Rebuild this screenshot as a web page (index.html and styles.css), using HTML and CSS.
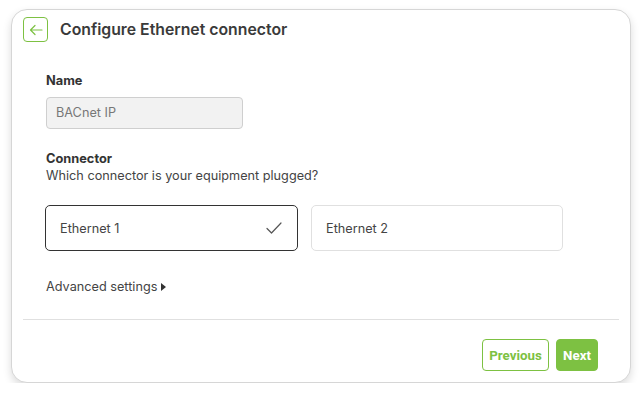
FILE: index.html
```html
<!DOCTYPE html>
<html lang="en">
<head>
<meta charset="utf-8">
<title>Configure Ethernet connector</title>
<link rel="stylesheet" href="styles.css">
</head>
<body>
<div class="card">
  <header class="head">
    <button class="back" aria-label="Back">
      <svg width="14" height="12" viewBox="0 0 14 12" fill="none" stroke="#7dc142" stroke-width="1.2" stroke-linecap="round" stroke-linejoin="round"><path d="M13 6H1.5M6 1.5L1.5 6L6 10.5"/></svg>
    </button>
    <h1 class="title">Configure Ethernet connector</h1>
  </header>
  <div class="body">
    <div class="label label-name">Name</div>
    <div class="input">BACnet IP</div>
    <div class="label label-conn">Connector</div>
    <div class="desc">Which connector is your equipment plugged?</div>
    <div class="options">
      <div class="opt opt-sel">
        <span>Ethernet 1</span>
        <svg width="16" height="12" viewBox="0 0 16 12" fill="none" stroke="#555" stroke-width="1.2" stroke-linecap="round" stroke-linejoin="round"><path d="M1 6.5L5.5 11L15 1"/></svg>
      </div>
      <div class="opt"><span>Ethernet 2</span></div>
    </div>
    <div class="adv">Advanced settings <span class="tri"></span></div>
  </div>
  <div class="divider"></div>
  <footer class="foot">
    <button class="btn btn-outline">Previous</button>
    <button class="btn btn-primary">Next</button>
  </footer>
</div>
</body>
</html>
```
FILE: styles.css
```css
* { box-sizing: border-box; }
html, body { margin: 0; padding: 0; background: #fff; }
body { font-family: Inter, "Noto Sans", sans-serif; color: #333; }

.card {
  margin: 9px 0 0 11px;
  width: 620px;
  height: 374px;
  border: 1px solid #d6d6d6;
  border-radius: 16px;
  background: #fff;
  box-shadow: 0 4px 8px rgba(0,0,0,0.14);
  padding: 0 11px;
  display: flex;
  flex-direction: column;
}

.head {
  display: flex;
  align-items: center;
  gap: 12px;
  padding-top: 7px;
  height: 32px;
}
.back {
  width: 25px;
  height: 25px;
  border: 1px solid #7dc142;
  border-radius: 4px;
  background: #fff;
  padding: 0;
  display: flex;
  align-items: center;
  justify-content: center;
}
.title {
  margin: 0;
  font-size: 15.8px;
  font-weight: 600;
  color: #3a3a3a;
  line-height: 20px;
}

.body {
  padding-left: 23px;
  display: flex;
  flex-direction: column;
  align-items: flex-start;
}
.label {
  font-size: 12.8px;
  font-weight: 700;
  line-height: 16px;
  color: #333;
}
.label-name { margin-top: 31px; }
.input {
  margin-top: 8px;
  width: 197px;
  height: 32px;
  border: 1px solid #cfcfcf;
  border-radius: 4px;
  background: #f2f2f2;
  color: #777;
  font-size: 12.7px;
  line-height: 30px;
  padding-left: 9px;
}
.label-conn { margin-top: 22px; }
.desc {
  margin-top: 1px;
  font-size: 12.7px;
  line-height: 16px;
  color: #444;
}
.options {
  margin-top: 21px;
  margin-left: -1px;
  display: flex;
  gap: 13px;
}
.opt {
  width: 253px;
  height: 46px;
  border: 1px solid #e0e0e0;
  border-radius: 5px;
  display: flex;
  align-items: center;
  justify-content: space-between;
  padding: 0 15px 0 14px;
  font-size: 12.7px;
  color: #444;
}
.opt + .opt { width: 252px; }
.opt-sel { border-color: #333; }
.adv {
  margin-top: 28px;
  font-size: 12.7px;
  line-height: 16px;
  color: #444;
  display: flex;
  align-items: center;
  gap: 4px;
}
.tri {
  width: 0;
  height: 0;
  border-top: 4px solid transparent;
  border-bottom: 4px solid transparent;
  border-left: 5px solid #333;
}

.divider {
  margin-top: 24px;
  height: 1px;
  background: #e0e0e0;
}

.foot {
  display: flex;
  justify-content: flex-end;
  gap: 7px;
  padding: 19px 21px 0 0;
}
.btn {
  height: 32px;
  border-radius: 4px;
  font-family: Roboto, "Liberation Sans", sans-serif;
  font-weight: 700;
  font-size: 13.3px;
  padding: 0;
  cursor: pointer;
}
.btn-outline {
  border: 1px solid #7dc142;
  background: #fff;
  color: #7dc142;
  width: 67px;
}
.btn-primary {
  border: 1px solid #7dc142;
  background: #7dc142;
  color: #fff;
  width: 42px;
}
```
